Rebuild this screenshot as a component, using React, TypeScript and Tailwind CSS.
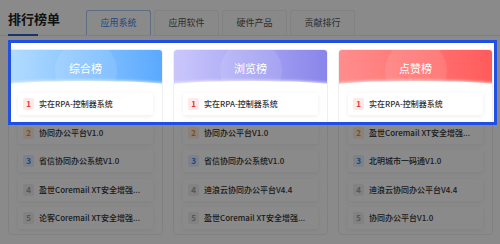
const boards = [
  {
    title: "综合榜",
    head: "bg-linear-to-r from-[#b2dcff] to-[#5aa9ff]",
    items: [
      "实在RPA-控制器系统",
      "协同办公平台V1.0",
      "省信协同办公系统V1.0",
      "盈世Coremail XT安全增强...",
      "论客Coremail XT安全增强...",
    ],
  },
  {
    title: "浏览榜",
    head: "bg-linear-to-r from-[#cbc7fc] to-[#8985ea]",
    items: [
      "实在RPA-控制器系统",
      "协同办公平台V1.0",
      "省信协同办公系统V1.0",
      "迪浪云协同办公平台V4.4",
      "盈世Coremail XT安全增强...",
    ],
  },
  {
    title: "点赞榜",
    head: "bg-linear-to-r from-[#ff8d8d] to-[#ff5b5b]",
    items: [
      "实在RPA-控制器系统",
      "盈世Coremail XT安全增强...",
      "北明城市一码通V1.0",
      "迪浪云协同办公平台V4.4",
      "协同办公平台V1.0",
    ],
  },
];

const badge = [
  "bg-[#ffe8e8] text-[#e53935]",
  "bg-[#fff0e2] text-[#ef8a22]",
  "bg-[#e5efff] text-[#3b7fe3]",
  "bg-[#f1f1f1] text-[#a0a0a0]",
  "bg-[#f1f1f1] text-[#a0a0a0]",
];

const tabs = ["应用系统", "应用软件", "硬件产品", "贡献排行"];

export default function App() {
  return (
    <div className="relative w-[500px] h-[244px] overflow-hidden bg-white font-['Noto_Sans_CJK_SC','Noto_Sans',sans-serif] text-[#333]">
      {/* header */}
      <div className="flex items-end h-[36px] px-2 border-b border-[#ececec]">
        <div className="flex flex-col justify-between h-full w-[78px]">
          <span className="mt-[10px] text-[13px] leading-[18px] font-bold text-[#222]">排行榜单</span>
          <div className="w-[30px] h-[2px] -mb-px bg-[#2a62c9]" />
        </div>
        <div className="flex gap-[3px]">
          {tabs.map((t, i) => (
            <div
              key={t}
              className={
                "flex items-center justify-center w-[65px] h-[25px] rounded-t-[3px] border border-b-0 text-[9px] " +
                (i === 0 ? "border-[#a9c7f3] text-[#3b82f6] bg-white" : "border-[#eeeeee] text-[#555] bg-[#fdfdfd]")
              }
            >
              {t}
            </div>
          ))}
        </div>
      </div>

      {/* boards */}
      <div className="grid grid-cols-[155px_155px_155px] gap-[10px] px-2 pt-[13px]">
        {boards.map((b) => (
          <div key={b.title} className="flex flex-col h-[186px] rounded-[4px] border border-[#efefef] bg-white overflow-hidden">
            <div className={"relative h-[40px] overflow-hidden " + b.head}>
              <div className="absolute left-1/2 -translate-x-1/2 top-[-10px] w-[62px] h-[62px] rounded-full bg-white/10" />
              <div className="relative flex justify-center pt-[10px] text-[11px] leading-[16px] text-white">{b.title}</div>
              <div className="absolute left-1/2 -translate-x-1/2 top-[31px] w-[200px] h-[16px] rounded-[50%] bg-white shadow-[0_-1px_3px_rgba(255,255,255,0.7)]" />
            </div>
            <div className="flex flex-col gap-[6.5px] px-[9px] mt-[3px]">
              {b.items.map((it, i) => (
                <div key={i} className="flex items-center h-[22px] px-[5px] rounded-[2px] bg-white shadow-[0_1px_4px_rgba(0,0,0,0.08)]">
                  <span className={"flex items-center justify-center w-[11px] h-[12px] rounded-[2px] text-[8px] font-bold " + badge[i]}>
                    {i + 1}
                  </span>
                  <span className="ml-[5px] text-[8px] font-medium text-[#333] whitespace-nowrap">{it}</span>
                </div>
              ))}
            </div>
          </div>
        ))}
      </div>

      {/* guide highlight */}
      <div className="pointer-events-none absolute left-[8px] top-[40px] w-[489px] h-[85px] border-[3px] border-[#1f4fe3] shadow-[0_0_0_600px_rgba(0,0,0,0.46)]" />
    </div>
  );
}
